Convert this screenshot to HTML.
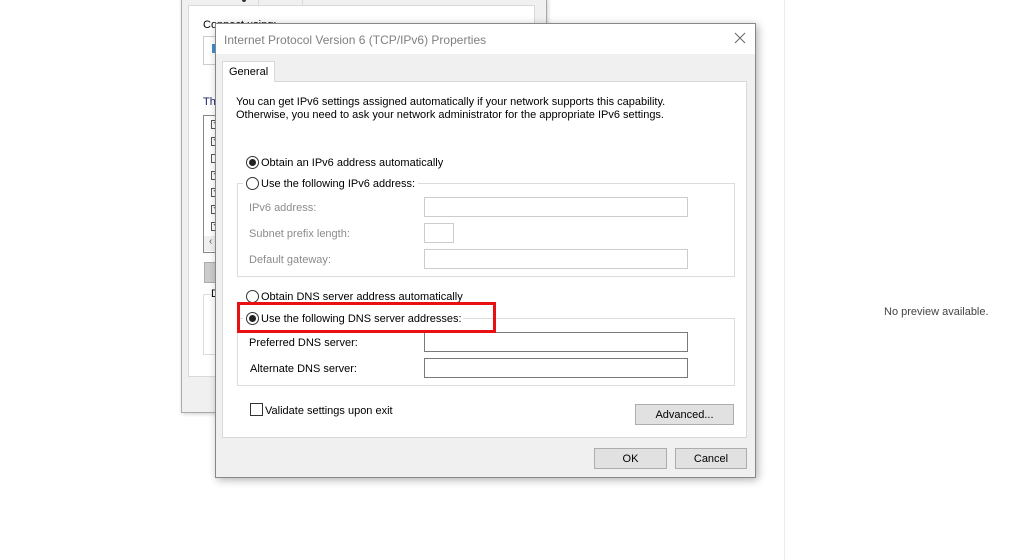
<!DOCTYPE html>
<html><head><meta charset="utf-8"><style>
*{box-sizing:border-box;margin:0;padding:0}
body{width:1034px;height:560px;background:#fff;position:relative;overflow:hidden;font-family:"Liberation Sans",sans-serif;font-size:11px;color:#000}
.a{position:absolute}
.t{position:absolute;white-space:nowrap;font-size:11px;margin-top:1px}
.g{color:#8c8c8c}
.rad{position:absolute;width:13px;height:13px;border:1px solid #333;border-radius:50%;background:#fff}
.rad.on::after{content:"";position:absolute;left:2px;top:2px;width:7px;height:7px;border-radius:50%;background:#222}
.inp{position:absolute;background:#fff;border:1px solid #7a7a7a;height:20px}
.inp.d{border-color:#ccc}
.btn{position:absolute;background:#e1e1e1;border:1px solid #adadad;height:21px;text-align:center;line-height:20px;font-size:11px}
.cb{position:absolute;width:9px;height:9px;border:1px solid #555;background:#fff;font-size:7px;line-height:7px;text-align:center}
</style></head><body>
<div class="a" style="left:784px;top:0;width:1px;height:560px;background:#ececec"></div>
<div class="t" style="left:884px;top:305px;color:#444">No preview available.</div>

<div class="a" style="left:181px;top:-2px;width:366px;height:415px;background:#f0f0f0;border:1px solid #aaa;box-shadow:1px 1px 4px rgba(0,0,0,.2)"></div>
<div class="a" style="left:188px;top:5px;width:347px;height:372px;background:#fff;border:1px solid #d9d9d9"></div>
<div class="a" style="left:258px;top:-2px;width:45px;height:8px;background:#f0f0f0;border:1px solid #d9d9d9"></div>
<div class="a" style="left:242px;top:-2px;width:4px;height:4px;border-radius:50%;background:#333"></div>
<div class="t" style="left:203px;top:18px">Connect using:</div>
<div class="a" style="left:203px;top:36px;width:40px;height:29px;border:1px solid #ccc"></div>
<div class="a" style="left:212px;top:44px;width:6px;height:9px;background:#3d8fd6"></div>
<div class="t" style="left:203px;top:95px;color:#1a1a6e">Th</div>
<div class="a" style="left:203px;top:115px;width:40px;height:138px;border:1px solid #828790"></div>
<div class="cb" style="left:211px;top:120px">&#x2198;</div>
<div class="cb" style="left:211px;top:137px">&#x2198;</div>
<div class="cb" style="left:211px;top:154px"></div>
<div class="cb" style="left:211px;top:171px">&#x2198;</div>
<div class="cb" style="left:211px;top:188px">&#x2198;</div>
<div class="cb" style="left:211px;top:205px">&#x2198;</div>
<div class="cb" style="left:211px;top:222px">&#x2198;</div>
<div class="a" style="left:204px;top:236px;width:20px;height:15px;background:#f0f0f0;font-size:10px;color:#555;padding-left:5px">&lsaquo;</div>
<div class="a" style="left:204px;top:262px;width:20px;height:21px;background:#ccc;border:1px solid #adadad"></div>
<div class="a" style="left:203px;top:294px;width:20px;height:61px;border:1px solid #ddd"></div>
<div class="t" style="left:211px;top:287px;background:#fff">D</div>

<div class="a" style="left:215px;top:23px;width:541px;height:455px;background:#f0f0f0;border:1px solid #888;box-shadow:2px 2px 8px rgba(0,0,0,.3)"></div>
<div class="a" style="left:216px;top:24px;width:539px;height:30px;background:#fff"></div>
<div class="t" style="left:224px;top:32px;font-size:12px;color:#808080">Internet Protocol Version 6 (TCP/IPv6) Properties</div>
<svg class="a" style="left:734px;top:32px" width="12" height="12"><path d="M1 1L11 11M11 1L1 11" stroke="#666" stroke-width="1"/></svg>

<div class="a" style="left:222px;top:81px;width:525px;height:357px;background:#fff;border:1px solid #d9d9d9"></div>
<div class="a" style="left:222px;top:61px;width:53px;height:21px;background:#fff;border:1px solid #d9d9d9;border-bottom:none"></div>
<div class="t" style="left:229px;top:65px">General</div>

<div class="t" style="left:236px;top:95px">You can get IPv6 settings assigned automatically if your network supports this capability.</div>
<div class="t" style="left:236px;top:108px">Otherwise, you need to ask your network administrator for the appropriate IPv6 settings.</div>

<div class="rad on" style="left:246px;top:156px"></div>
<div class="t" style="left:261px;top:156px">Obtain an IPv6 address automatically</div>

<div class="a" style="left:237px;top:183px;width:498px;height:94px;border:1px solid #dcdcdc"></div>
<div class="a" style="left:243px;top:176px;width:175px;height:14px;background:#fff"></div>
<div class="rad" style="left:246px;top:177px"></div>
<div class="t" style="left:261px;top:177px">Use the following IPv6 address:</div>
<div class="t g" style="left:249px;top:201px">IPv6 address:</div>
<div class="inp d" style="left:424px;top:197px;width:264px"></div>
<div class="t g" style="left:249px;top:227px">Subnet prefix length:</div>
<div class="inp d" style="left:424px;top:223px;width:30px"></div>
<div class="t g" style="left:249px;top:253px">Default gateway:</div>
<div class="inp d" style="left:424px;top:249px;width:264px"></div>

<div class="rad" style="left:246px;top:290px"></div>
<div class="t" style="left:261px;top:290px">Obtain DNS server address automatically</div>

<div class="a" style="left:237px;top:318px;width:498px;height:68px;border:1px solid #dcdcdc"></div>
<div class="a" style="left:243px;top:311px;width:220px;height:14px;background:#fff"></div>
<div class="rad on" style="left:246px;top:312px"></div>
<div class="t" style="left:261px;top:312px">Use the following DNS server addresses:</div>
<div class="t" style="left:249px;top:336px">Preferred DNS server:</div>
<div class="inp" style="left:424px;top:332px;width:264px"></div>
<div class="t" style="left:250px;top:362px">Alternate DNS server:</div>
<div class="inp" style="left:424px;top:358px;width:264px"></div>

<div class="a" style="left:237px;top:302px;width:259px;height:31px;border:3px solid #e81010"></div>

<div class="a" style="left:250px;top:403px;width:13px;height:13px;border:1px solid #333;background:#fff"></div>
<div class="t" style="left:265px;top:404px">Validate settings upon exit</div>
<div class="btn" style="left:635px;top:404px;width:99px">Advanced...</div>

<div class="btn" style="left:594px;top:448px;width:73px">OK</div>
<div class="btn" style="left:675px;top:448px;width:72px">Cancel</div>
</body></html>
